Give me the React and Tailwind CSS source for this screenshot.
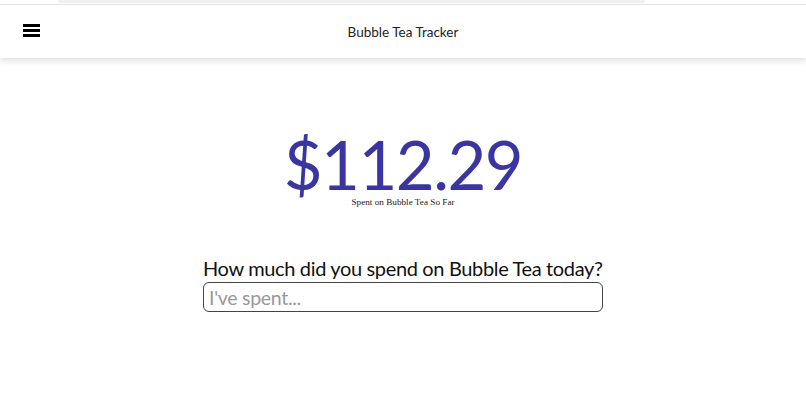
export default function App() {
  const f = { fontFamily: 'Lato, sans-serif' };
  return (
    <div className="w-[806px] h-[405px] bg-white overflow-hidden relative">
      <div className="h-[5px] relative border-b border-[#e8e8e8]">
        <div className="absolute left-[58px] w-[587px] top-0 h-[3px] bg-[#f0f0f0] rounded-b-md" />
      </div>
      <header className="h-[53px] flex items-center relative bg-white shadow-[0_3px_6px_rgba(0,0,0,0.12)]">
        <div className="absolute left-[23px] top-[19px] flex flex-col gap-[2.5px]">
          <div className="w-[17px] h-[2.5px] bg-black" />
          <div className="w-[17px] h-[2.5px] bg-black" />
          <div className="w-[17px] h-[2.5px] bg-black" />
        </div>
        <div className="w-full text-center text-[13.5px] text-[#222] pt-[1px]" style={f}>
          Bubble Tea Tracker
        </div>
      </header>
      <div className="flex flex-col items-center pt-[76px]">
        <div className="text-[67px] leading-[60px] text-[#3a35a0] tracking-[-1.5px]" style={f}>
          $112.29
        </div>
        <div className="text-[9.2px] leading-[10px] text-[#222] mt-[3px]" style={{ fontFamily: '"Liberation Serif", serif' }}>
          Spent on Bubble Tea So Far
        </div>
      </div>
      <div className="flex flex-col items-center mt-[48px]">
        <div className="w-[400px]">
          <div className="text-[20px] leading-[27px] text-[#111] whitespace-nowrap tracking-[-0.35px]" style={f}>
            How much did you spend on Bubble Tea today?
          </div>
          <input
            className="w-[400px] h-[30px] border-[1.5px] border-[#444] rounded-[6px] px-[5px] text-[19.5px] tracking-[-0.3px] placeholder:text-[#999] outline-none"
            style={f}
            placeholder="I've spent..."
          />
        </div>
      </div>
    </div>
  );
}
